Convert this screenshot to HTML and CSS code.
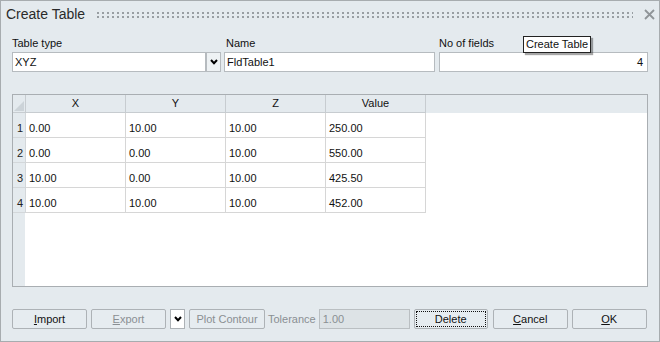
FILE: index.html
```html
<!DOCTYPE html>
<html>
<head>
<meta charset="utf-8">
<title>Create Table</title>
<link rel="stylesheet" href="styles.css">
</head>
<body>
<div class="window">
  <header class="titlebar">
    <span class="title">Create Table</span>
    <span class="grip"></span>
    <svg class="close" width="11" height="11" viewBox="0 0 11 11"><path d="M1 1L10 10M10 1L1 10" stroke="#8f9498" stroke-width="1.8" fill="none"/></svg>
  </header>
  <main class="content">
    <div class="fields">
      <div class="field f-type">
        <span class="label">Table type</span>
        <div class="combo">
          <div class="input">XYZ</div>
          <div class="combo-btn"><svg width="8" height="6" viewBox="0 0 8 6"><path d="M1 1L4 4.2L7 1" stroke="#000" stroke-width="2" fill="none"/></svg></div>
        </div>
      </div>
      <div class="field f-name">
        <span class="label">Name</span>
        <div class="input">FldTable1</div>
      </div>
      <div class="field f-count">
        <span class="label">No of fields</span>
        <div class="input num">4</div>
      </div>
    </div>

    <div class="grid">
      <div class="row head">
        <div class="rh corner"><svg width="10" height="10" viewBox="0 0 10 10"><path d="M10 0L10 10L0 10Z" fill="#ccd3d8"/></svg></div>
        <div class="cell">X</div>
        <div class="cell">Y</div>
        <div class="cell">Z</div>
        <div class="cell">Value</div>
      </div>
      <div class="row">
        <div class="rh">1</div>
        <div class="cell">0.00</div>
        <div class="cell">10.00</div>
        <div class="cell">10.00</div>
        <div class="cell">250.00</div>
      </div>
      <div class="row">
        <div class="rh">2</div>
        <div class="cell">0.00</div>
        <div class="cell">0.00</div>
        <div class="cell">10.00</div>
        <div class="cell">550.00</div>
      </div>
      <div class="row">
        <div class="rh">3</div>
        <div class="cell">10.00</div>
        <div class="cell">0.00</div>
        <div class="cell">10.00</div>
        <div class="cell">425.50</div>
      </div>
      <div class="row">
        <div class="rh">4</div>
        <div class="cell">10.00</div>
        <div class="cell">10.00</div>
        <div class="cell">10.00</div>
        <div class="cell">452.00</div>
      </div>
    </div>

    <div class="buttons">
      <div class="btn b-import"><u>I</u>mport</div>
      <div class="btn b-export disabled"><u>E</u>xport</div>
      <div class="btn b-drop"><svg width="8" height="6" viewBox="0 0 8 6"><path d="M1 1L4 4.2L7 1" stroke="#000" stroke-width="2" fill="none"/></svg></div>
      <div class="btn b-plot disabled">Plot Contour</div>
      <span class="tol-label">Tolerance</span>
      <div class="input tol">1.00</div>
      <div class="btn b-delete focused">Delete</div>
      <div class="btn b-cancel"><u>C</u>ancel</div>
      <div class="btn b-ok"><u>O</u>K</div>
    </div>
  </main>
  <div class="tooltip">Create Table</div>
</div>
</body>
</html>
```

FILE: styles.css
```css
* { box-sizing: border-box; }

body {
  margin: 0;
  font-family: "Liberation Sans", Arial, sans-serif;
  font-size: 11px;
  color: #111;
}

.window {
  position: relative;
  width: 660px;
  height: 342px;
  border: 1px solid #a7acaf;
  background: #e4eaee;
  display: flex;
  flex-direction: column;
}

/* title bar */
.titlebar {
  display: flex;
  align-items: flex-start;
  height: 27px;
  padding-left: 5px;
  flex: none;
}
.title {
  font-size: 14px;
  line-height: 27px;
  color: #2a2a2a;
}
.grip {
  flex: 1;
  margin: 11px 11px 0 12px;
  height: 6px;
  background-image: conic-gradient(at 2px 2px, transparent 75%, #989ea2 75%);
  background-size: 5px 4px;
}
.close {
  margin: 8px 4px 0 0;
}

/* content */
.content {
  padding: 8px 11px 0 11px;
  display: flex;
  flex-direction: column;
}

.fields {
  display: flex;
}
.field {
  display: flex;
  flex-direction: column;
}
.f-type { width: 209px; }
.f-name { width: 211px; margin-left: 3px; }
.f-count { width: 209px; margin-left: 4px; }
.f-name .label { padding-left: 2px; }

.label {
  height: 14px;
  line-height: 14px;
  margin-bottom: 2px;
  color: #111;
}

.input {
  height: 20px;
  border: 1px solid #b6bbbf;
  background: #fff;
  line-height: 18px;
  padding: 0 2px;
  color: #111;
}
.input.num { text-align: right; padding-right: 4px; }

.combo { display: flex; }
.combo .input { width: 194px; }
.combo-btn {
  width: 15px;
  height: 20px;
  border: 1px solid #b6bbbf;
  background: #eef2f4;
  display: flex;
  align-items: center;
  justify-content: center;
}

/* grid */
.grid {
  margin-top: 22px;
  height: 193px;
  border: 1px solid #a9aeb2;
  background: linear-gradient(to right, #e4eaee 12px, #fff 12px);
  display: flex;
  flex-direction: column;
}
.row {
  display: flex;
  height: 25px;
  flex: none;
}
.row.head {
  height: 18px;
  background: #e4eaee;
}
.rh {
  width: 13px;
  border-right: 1px solid #d3d7da;
  border-bottom: 1px solid #d3d7da;
  text-align: right;
  padding: 5px 2px 0 0;
  line-height: 20px;
  color: #222;
}
.cell {
  width: 100px;
  border-right: 1px solid #d6d6d6;
  border-bottom: 1px solid #d6d6d6;
  padding: 5px 0 0 3px;
  line-height: 20px;
  background: #fff;
}
.head .cell {
  background: #e4eaee;
  text-align: center;
  padding: 0;
  line-height: 17px;
  border-right-color: #c7ccd0;
  border-bottom-color: #c7ccd0;
}
.head .corner {
  padding: 6px 0 0 1px;
  line-height: 0;
  border-right-color: #c7ccd0;
  border-bottom-color: #c7ccd0;
  text-align: left;
}

/* buttons */
.buttons {
  margin-top: 22px;
  display: flex;
  align-items: center;
  height: 20px;
}
.btn {
  height: 20px;
  border: 1px solid #adb2b6;
  border-radius: 2px;
  background: #e6ecf0;
  text-align: center;
  line-height: 18px;
  color: #111;
  position: relative;
}
.btn.disabled { color: #8a8f93; }
.b-import { width: 75px; }
.b-export { width: 75px; margin-left: 4px; }
.b-drop {
  width: 15px;
  margin-left: 4px;
  background: #fff;
  border-radius: 0;
  display: flex;
  align-items: center;
  justify-content: center;
}
.b-plot { width: 76px; margin-left: 4px; }
.tol-label { margin-left: 3px; color: #8a8f93; line-height: 20px; }
.input.tol {
  width: 91px;
  margin-left: 3px;
  background: #dde3e6;
  border-color: #babfc2;
  color: #8a8f93;
  padding-left: 3px;
}
.b-delete { width: 74px; margin-left: 4px; }
.b-cancel { width: 75px; margin-left: 5px; }
.b-ok { width: 75px; margin-left: 4px; }

.focused::after {
  content: "";
  position: absolute;
  inset: 1px;
  border: 1px dotted #111;
}

/* tooltip */
.tooltip {
  position: absolute;
  left: 522px;
  top: 35px;
  height: 17px;
  padding: 0 2px 0 2px;
  border: 1px solid #222;
  background: #fff;
  line-height: 15px;
  color: #111;
  box-shadow: 2px 2px 1px rgba(0, 0, 0, 0.35);
}
```
